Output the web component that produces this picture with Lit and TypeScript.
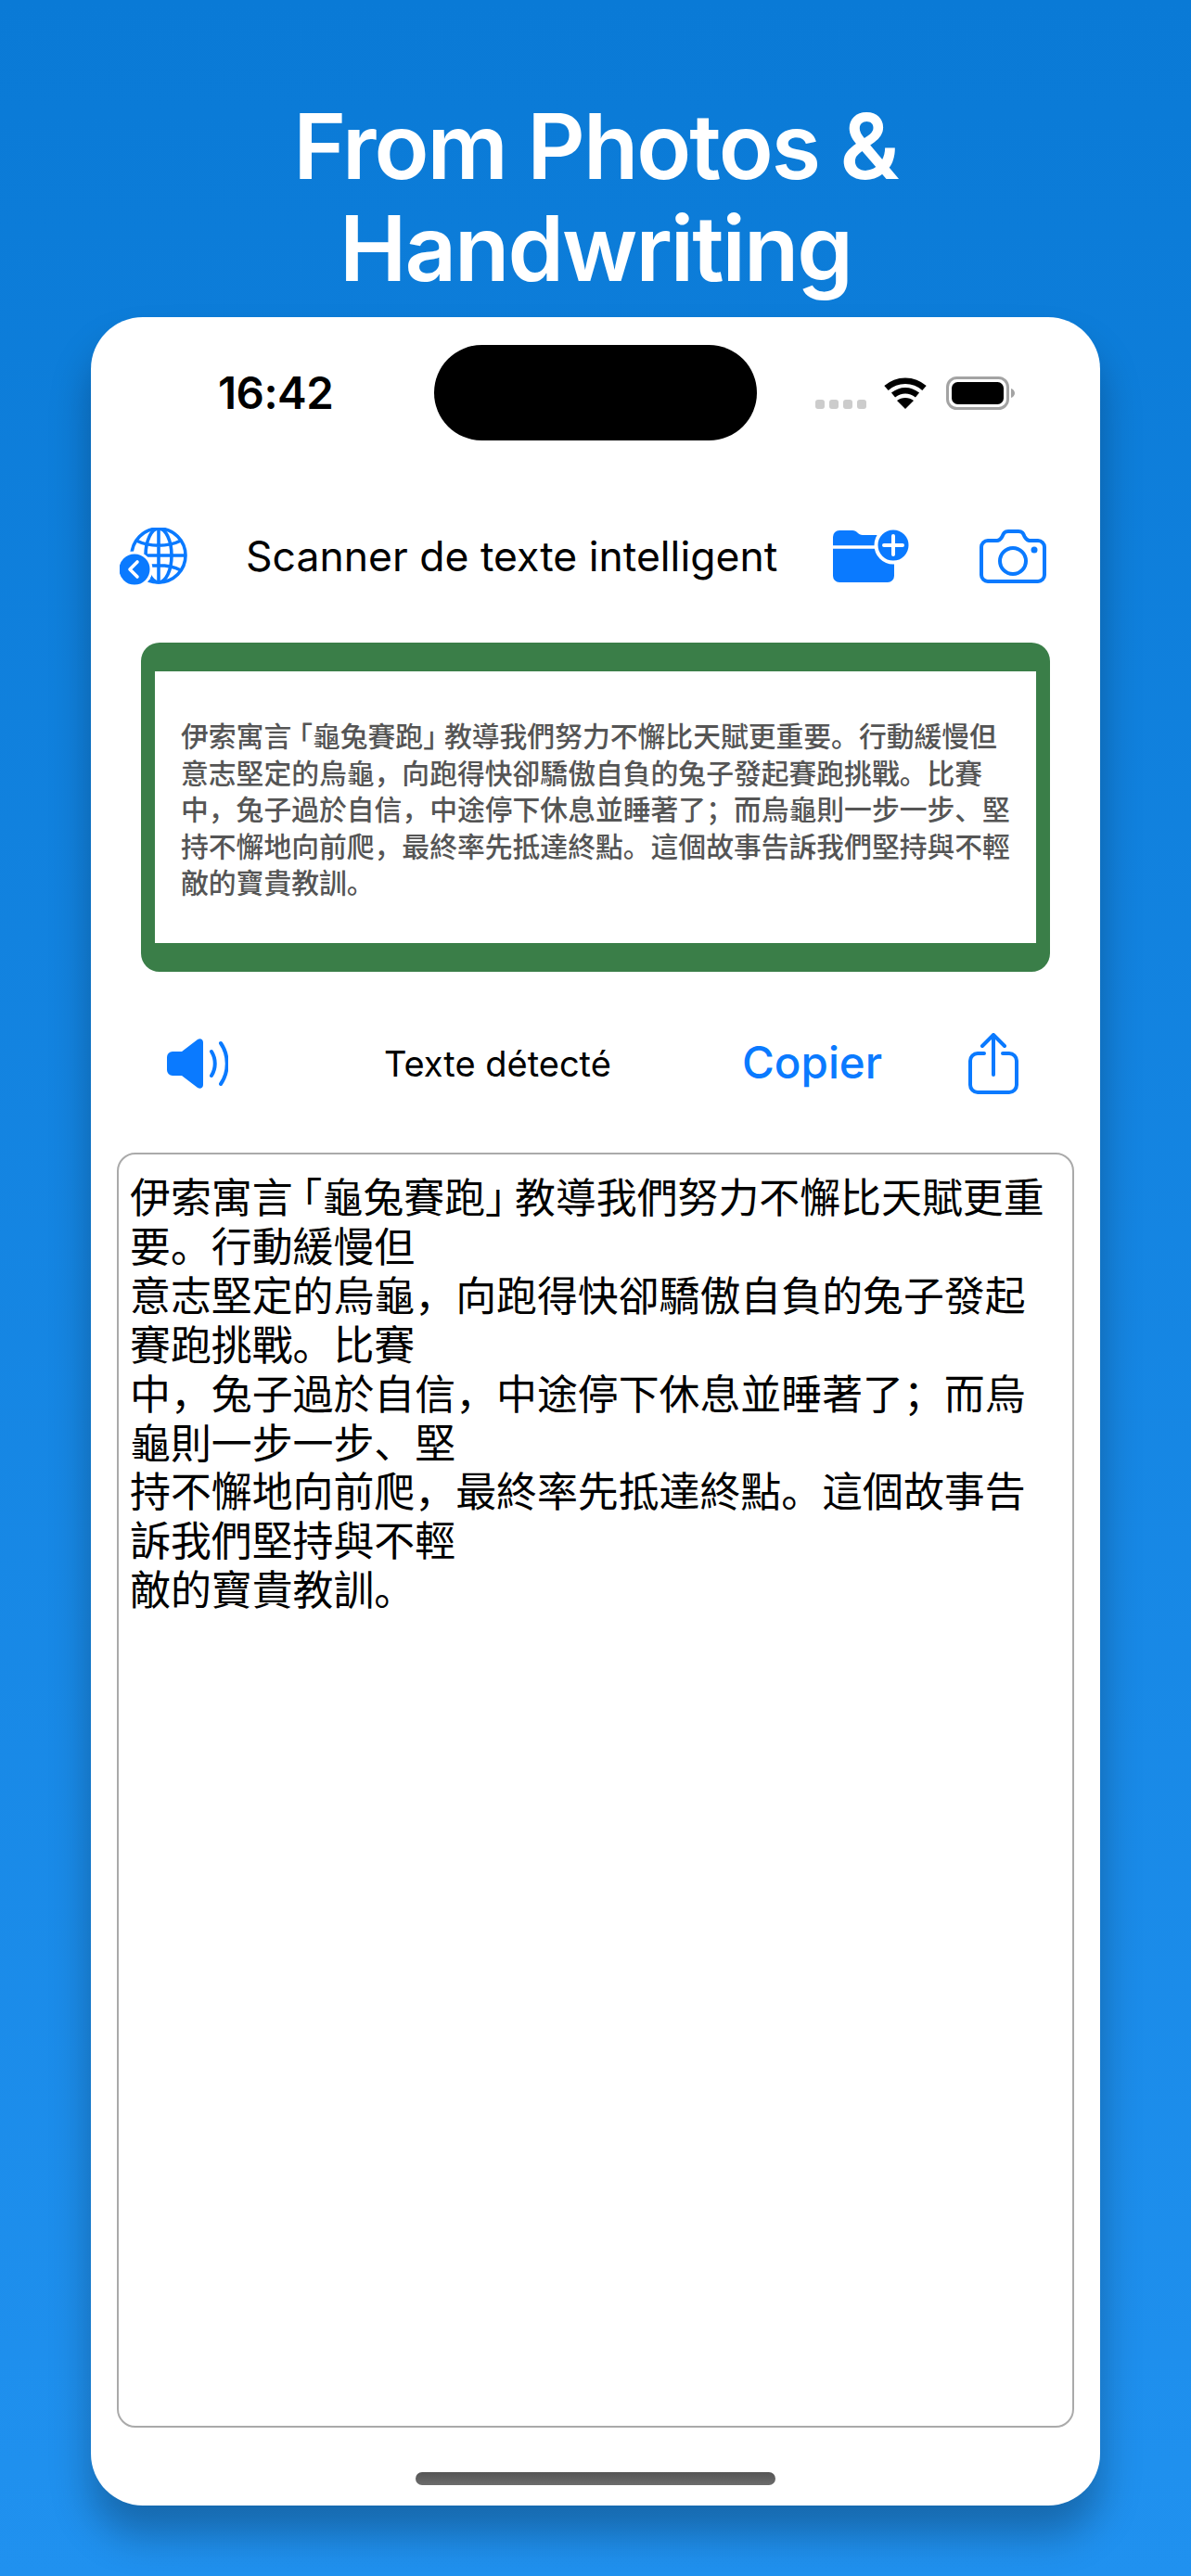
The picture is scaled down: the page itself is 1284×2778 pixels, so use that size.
import { LitElement, html, css } from "lit";
import { customElement } from "lit/decorators.js";

const SCAN = ["伊索寓言「龜兔賽跑」教導我們努力不懈比天賦更重要。行動緩慢但","意志堅定的烏龜，向跑得快卻驕傲自負的兔子發起賽跑挑戰。比賽","中，兔子過於自信，中途停下休息並睡著了；而烏龜則一步一步、堅","持不懈地向前爬，最終率先抵達終點。這個故事告訴我們堅持與不輕","敵的寶貴教訓。"];
const BODY = ["伊索寓言「龜兔賽跑」教導我們努力不懈比天賦更重","要。行動緩慢但","意志堅定的烏龜，向跑得快卻驕傲自負的兔子發起","賽跑挑戰。比賽","中，兔子過於自信，中途停下休息並睡著了；而烏","龜則一步一步、堅","持不懈地向前爬，最終率先抵達終點。這個故事告","訴我們堅持與不輕","敵的寶貴教訓。"];

function line(text: string) {
  const m = text.match(/^(.*)(.)「(.*)」(.*)$/);
  if (!m) return html`<div>${text}</div>`;
  return html`<div>${m[1]}<span class="tight">${m[2]}</span>「${m[3]}<span class="tight">」</span>${m[4]}</div>`;
}

@customElement("app-root")
export class AppRoot extends LitElement {
  static styles = css`
    :host { display: block; width: 1284px; height: 2778px; overflow: hidden; font-family: Inter, "Liberation Sans", "Noto Sans CJK SC", sans-serif; }
    .page { height: 2778px; box-sizing: border-box; padding-top: 103px; background: linear-gradient(180deg, #0a7ad6 0%, #2091ef 100%); }
    h1 { margin: 0 0 19px; color: #fff; text-align: center; font-size: 97px; line-height: 110px; font-weight: 600; letter-spacing: -2px; }
    .phone { margin: 0 98px; height: 2360px; box-sizing: border-box; background: #fff; border-radius: 56px; padding-top: 30px; box-shadow: 0 32px 44px rgba(0,0,0,.28); display: flex; flex-direction: column; }
    .status { height: 103px; display: flex; align-items: center; }
    .time { width: 123px; margin-left: 137px; font-size: 47.5px; font-weight: 600; color: #000; letter-spacing: -.5px; white-space: nowrap; }
    .island { width: 348px; height: 103px; margin-left: 110px; background: #000; border-radius: 52px; }
    .dots { display: flex; gap: 5px; margin-left: 63px; margin-top: 24px; }
    .dots i { width: 10px; height: 10px; border-radius: 3px; background: #ccc; }
    .wifi { margin-left: 19px; }
    .battery { margin-left: 21px; }
    .nav { height: 70px; margin-top: 90px; display: flex; align-items: center; padding-left: 31px; }
    .title { width: 572px; margin-left: 63px; font-size: 44.5px; white-space: nowrap; color: #000; font-weight: 400; }
    .folder { margin-left: 61px; }
    .camera { margin-left: 76px; }
    .scan { margin: 58px 54px 0; height: 355px; box-sizing: border-box; border: solid #3a7e48; border-width: 31px 15px; border-radius: 20px; background: #fff; display: flex; flex-direction: column; justify-content: center; padding: 3px 0 0 28px; background-clip: padding-box; }
    .scan div { font-family: "Noto Sans CJK SC", sans-serif; font-size: 29.8px; line-height: 39.5px; color: #555; font-weight: 500; white-space: nowrap; }
    .scan .tight { letter-spacing: -7px; }
    .actions { height: 70px; margin-top: 64px; display: flex; align-items: center; padding-left: 82px; }
    .label { width: 245px; margin-left: 168px; font-size: 38px; white-space: nowrap; color: #000; }
    .copy { width: 149px; margin-left: 141px; margin-top: -3px; font-size: 47.5px; font-weight: 500; color: #0a7aff; white-space: nowrap; }
    .share { margin-left: 95px; }
    .box { margin: 61px 28px 0; height: 1375px; box-sizing: border-box; border: 2.5px solid #aaa; border-radius: 20px; padding: 18px 12px; overflow: hidden; }
    .box div { font-family: "Noto Sans CJK SC", sans-serif; font-size: 43.9px; line-height: 52.9px; color: #000; white-space: nowrap; }
    .box .tight { letter-spacing: -12px; }
    .home { width: 388px; height: 14px; margin: 48px auto 0; border-radius: 7px; background: linear-gradient(180deg,#555,#6c6c6c); }
    svg { display: block; flex: none; }
  `;

  render() {
    return html`<div class="page">
      <h1>From Photos &amp;<br />Handwriting</h1>
      <div class="phone">
        <div class="status">
          <span class="time">16:42</span>
          <div class="island"></div>
          <div class="dots"><i></i><i></i><i></i><i></i></div>
          <svg class="wifi" width="46" height="36" viewBox="0 0 46 36"><path fill="none" stroke="#000" stroke-width="6.5" d="M2.500 12.500C14 2 32 2 43.500 12.500M10 20c8-6.500 18-6.500 26 0"/><path d="M23 35l-9-9c5-4 13-4 18 0z"/></svg>
          <svg class="battery" width="74" height="36" viewBox="0 0 74 36"><rect x="1.500" y="1.500" width="65" height="33" rx="10" fill="none" stroke="#a3a3a3" stroke-width="3"/><rect x="6" y="6" width="56" height="24" rx="6.500"/><path d="M70 13c2.500.8 4 2.800 4 5s-1.500 4.200-4 5z" fill="#a3a3a3"/></svg>
        </div>
        <div class="nav">
          <svg width="73" height="62" viewBox="0 0 73 62" fill="none" stroke="#0a7aff" stroke-width="3.600">
            <circle cx="42" cy="30" r="29"/><ellipse cx="42" cy="30" rx="14" ry="29"/><path d="M42 1v58M13 30h58M18 14c14 7 34 7 48 0M18 46c14-7 34-7 48 0"/>
            <circle cx="16" cy="45" r="18" fill="#0a7aff" stroke="#fff" stroke-width="3"/><path d="M19 37l-8 8 8 8" stroke="#fff" stroke-width="3.600" stroke-linecap="round" stroke-linejoin="round"/>
          </svg>
          <span class="title">Scanner de texte intelligent</span>
          <svg class="folder" width="82" height="58" viewBox="0 0 82 58">
            <path fill="#0a7aff" d="M0 8a7 7 0 0 1 7-7h14c5 0 6 5 11 5h27a7 7 0 0 1 7 7v37a7 7 0 0 1-7 7H7a7 7 0 0 1-7-7z"/>
            <path d="M0 19h52" stroke="#fff" stroke-width="3.500"/>
            <circle cx="65" cy="17" r="18.500" fill="#0a7aff" stroke="#fff" stroke-width="4"/>
            <path d="M65 7v20M55 17h20" stroke="#fff" stroke-width="4" stroke-linecap="round"/>
          </svg>
          <svg class="camera" width="72" height="58" viewBox="0 0 72 58" fill="none" stroke="#0a7aff" stroke-width="4">
            <path d="M9 12h10c3 0 4-2 5.500-4.500C26 4 27 2 31 2h11c4 0 5 2 6.500 5.500C50 10 51 12 54 12h9a7 7 0 0 1 7 7v30a7 7 0 0 1-7 7H9a7 7 0 0 1-7-7V19a7 7 0 0 1 7-7z"/>
            <circle cx="36" cy="34" r="14"/><circle cx="59" cy="22" r="3.500" fill="#0a7aff" stroke="none"/>
          </svg>
        </div>
        <div class="scan">${SCAN.map(line)}</div>
        <div class="actions">
          <svg width="66" height="54" viewBox="0 0 66 54">
            <path fill="#0a7aff" d="M0 20a6 6 0 0 1 6-6h10L33 1c3-2 6 0 6 3v46c0 3-3 5-6 3L16 40H6a6 6 0 0 1-6-6z"/>
            <path fill="none" stroke="#0a7aff" stroke-width="4" stroke-linecap="round" d="M48 14c5 8 5 18 0 26M58 5c9 13 9 31 0 44"/>
          </svg>
          <span class="label">Texte détecté</span>
          <span class="copy">Copier</span>
          <svg class="share" width="54" height="66" viewBox="0 0 54 66" fill="none" stroke="#0a7aff" stroke-width="4" stroke-linecap="round" stroke-linejoin="round">
            <path d="M17 22H10a8 8 0 0 0-8 8v26a8 8 0 0 0 8 8h34a8 8 0 0 0 8-8V30a8 8 0 0 0-8-8h-7"/>
            <path d="M27 45V3M15 14L27 2l12 12"/>
          </svg>
        </div>
        <div class="box">${BODY.map(line)}</div>
        <div class="home"></div>
      </div>
    </div>`;
  }
}
